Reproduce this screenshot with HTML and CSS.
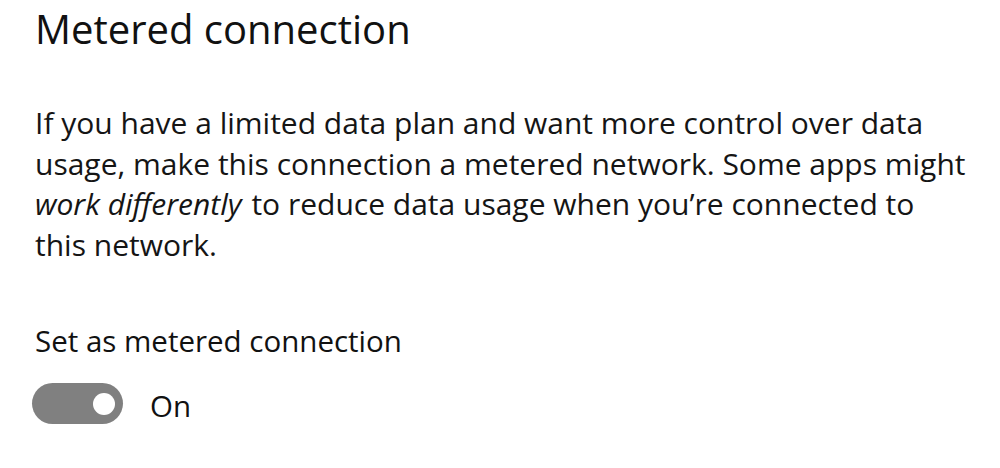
FILE: index.html
```html
<!DOCTYPE html>
<html lang="en">

<head>
    <meta charset="UTF-8">
    <meta name="viewport" content="width=device-width, initial-scale=1.0">
    <title>Metered connection</title>
    <link rel="stylesheet" href="styles.css">
</head>

<body>
    <div class="metered_box">
        <h2 class="metered_title">Metered connection</h2>
        <p class="metered_desc">If you have a limited data plan and want more control over data usage, make this connection a metered network. Some apps might <em>work differently</em> to reduce data usage when you’re connected to this network.</p>
        <div class="metered_set">
            <p class="metered_label">Set as metered connection</p>
            <!-- 开关 -->
            <div class="metered_toggle">
                <span class="toggle_track"><span class="toggle_knob"></span></span>
                <span class="toggle_text">On</span>
            </div>
        </div>
    </div>
</body>

</html>
```

FILE: styles.css
```css
* {
    padding: 0;
    margin: 0;
    list-style: none;
    outline: none;
    text-decoration: none;
}

body {
    background: #FFFFFF;
    font-family: "Open Sans", "Noto Sans", sans-serif;
    color: #111111;
}

.metered_box {
    width: 1000px;
    height: 468px;
    padding: 2px 0 0 35px;
    box-sizing: border-box;
}

.metered_title {
    font-size: 40px;
    font-weight: 400;
    line-height: 54px;
}

.metered_desc {
    margin-top: 47px;
    width: 932px;
    font-size: 30px;
    line-height: 40.7px;
    color: #151515;
}

.metered_desc>em {
    font-style: italic;
    padding-right: 2px;
}

.metered_set {
    margin-top: 55px;
}

.metered_label {
    font-size: 29.5px;
    line-height: 40px;
}

.metered_toggle {
    margin-top: 21px;
    margin-left: -3px;
    display: flex;
    align-items: center;
}

.toggle_track {
    width: 91px;
    height: 41px;
    border-radius: 21px;
    background: #808080;
    display: flex;
    align-items: center;
    justify-content: flex-end;
    padding-right: 8px;
    box-sizing: border-box;
}

.toggle_knob {
    width: 22px;
    height: 22px;
    border-radius: 50%;
    background: #FFFFFF;
}

.toggle_text {
    margin-left: 27px;
    padding-top: 4px;
    font-size: 29.5px;
    line-height: 40px;
}
```
